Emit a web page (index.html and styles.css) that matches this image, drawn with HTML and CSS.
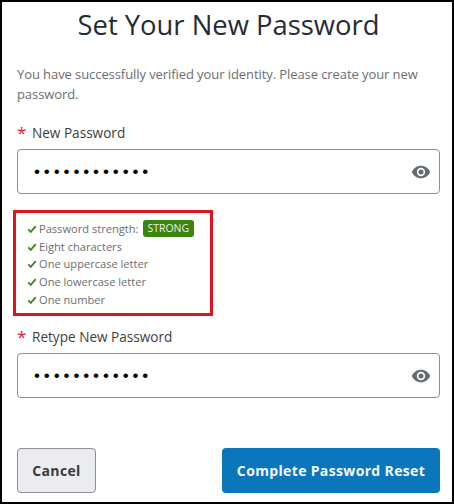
FILE: index.html
```html
<!DOCTYPE html>
<html lang="en">
<head>
<meta charset="utf-8">
<title>Set Your New Password</title>
<link rel="stylesheet" href="styles.css">
</head>
<body>
<main class="frame">
  <h1 class="title">Set Your New Password</h1>
  <p class="intro">You have successfully verified your identity. Please create your new password.</p>
  <div class="label"><span class="req">*</span>New Password</div>
  <div class="input">
    <span class="dots">••••••••••••</span>
    <svg class="eye" viewBox="0 0 24 24" aria-hidden="true"><path d="M12 4.500C7 4.500 2.700 7.600 1 12c1.700 4.400 6 7.500 11 7.500s9.300-3.100 11-7.500c-1.700-4.400-6-7.500-11-7.500zM12 17a5 5 0 1 1 0-10 5 5 0 0 1 0 10zm0-8a3 3 0 1 0 0 6 3 3 0 0 0 0-6z"/></svg>
  </div>
  <section class="rules">
    <div class="rule"><svg class="check" viewBox="0 0 12 12"><path d="M1.500 6.500 4.500 9.500 10.500 2.500"/></svg>Password strength:<span class="badge">STRONG</span></div>
    <div class="rule"><svg class="check" viewBox="0 0 12 12"><path d="M1.500 6.500 4.500 9.500 10.500 2.500"/></svg>Eight characters</div>
    <div class="rule"><svg class="check" viewBox="0 0 12 12"><path d="M1.500 6.500 4.500 9.500 10.500 2.500"/></svg>One uppercase letter</div>
    <div class="rule"><svg class="check" viewBox="0 0 12 12"><path d="M1.500 6.500 4.500 9.500 10.500 2.500"/></svg>One lowercase letter</div>
    <div class="rule"><svg class="check" viewBox="0 0 12 12"><path d="M1.500 6.500 4.500 9.500 10.500 2.500"/></svg>One number</div>
  </section>
  <div class="label label-second"><span class="req">*</span>Retype New Password</div>
  <div class="input">
    <span class="dots">••••••••••••</span>
    <svg class="eye" viewBox="0 0 24 24" aria-hidden="true"><path d="M12 4.500C7 4.500 2.700 7.600 1 12c1.700 4.400 6 7.500 11 7.500s9.300-3.100 11-7.500c-1.700-4.400-6-7.500-11-7.500zM12 17a5 5 0 1 1 0-10 5 5 0 0 1 0 10zm0-8a3 3 0 1 0 0 6 3 3 0 0 0 0-6z"/></svg>
  </div>
  <div class="actions">
    <button class="btn btn-cancel">Cancel</button>
    <button class="btn btn-primary">Complete Password Reset</button>
  </div>
</main>
</body>
</html>
```
FILE: styles.css
```css
* { box-sizing: border-box; }
html, body { margin: 0; padding: 0; background: #fff; }
body { width: 454px; height: 504px; overflow: hidden; font-family: "Open Sans", "Noto Sans", sans-serif; }
.frame {
  width: 454px; height: 504px;
  border: 2px solid #000;
  padding: 0 12px 0 15px;
  background: #fff;
  display: flex; flex-direction: column;
}
.title { margin: 4px 0 0; font-size: 27.4px; line-height: 38px; font-weight: 400; color: #252b36; text-align: center; }
.intro { margin: 20px 0 0; font-size: 13px; letter-spacing: -0.08px; line-height: 20px; color: #6b6d70; }
.label { margin-top: 19px; height: 20px; font-size: 13.6px; line-height: 20px; color: #3e3e3c; display: flex; }
.label-second { margin-top: 11px; }
.req { color: #d9202e; width: 15px; font-size: 17px; }
.input {
  margin-top: 6px; height: 45px; flex: none;
  border: 1px solid #8f8f8f; border-radius: 4px;
  display: flex; align-items: center; justify-content: space-between;
  padding: 0 8px 0 16px;
}
.dots { font-family: "Liberation Sans", sans-serif; font-size: 17px; letter-spacing: 3.9px; color: #000; }
.eye { width: 20px; height: 20px; fill: #666b70; }
.rules {
  margin: 16px 0 0 -4px; width: 200px; height: 106px; flex: none;
  border: 3px solid #e0141f;
  padding: 7px 0 0 11px;
}
.rule { height: 17.7px; font-size: 11.1px; line-height: 17.7px; color: #6b6d70; display: flex; align-items: center; }
.check { width: 10px; height: 10px; margin-right: 2px; fill: none; stroke: #3c8a14; stroke-width: 2.2; flex: none; }
.badge {
  margin-left: 4.500px; padding: 0 4.500px; height: 17px; line-height: 17px;
  font-size: 10.5px; color: #e8f3e0; background: #3a8410; border-radius: 3px;
}
.actions { margin-top: 50px; display: flex; justify-content: space-between; }
.btn { height: 45px; border-radius: 4px; font-family: "Open Sans", "Noto Sans", sans-serif; font-size: 14px; font-weight: 700; letter-spacing: 0.35px; padding: 0; }
.btn-cancel { width: 79px; background: #ebecef; border: 1px solid #8f8f8f; color: #3a3a3c; }
.btn-primary { width: 218px; background: #0b76bc; border: 0; color: #f4f8fb; }
```
